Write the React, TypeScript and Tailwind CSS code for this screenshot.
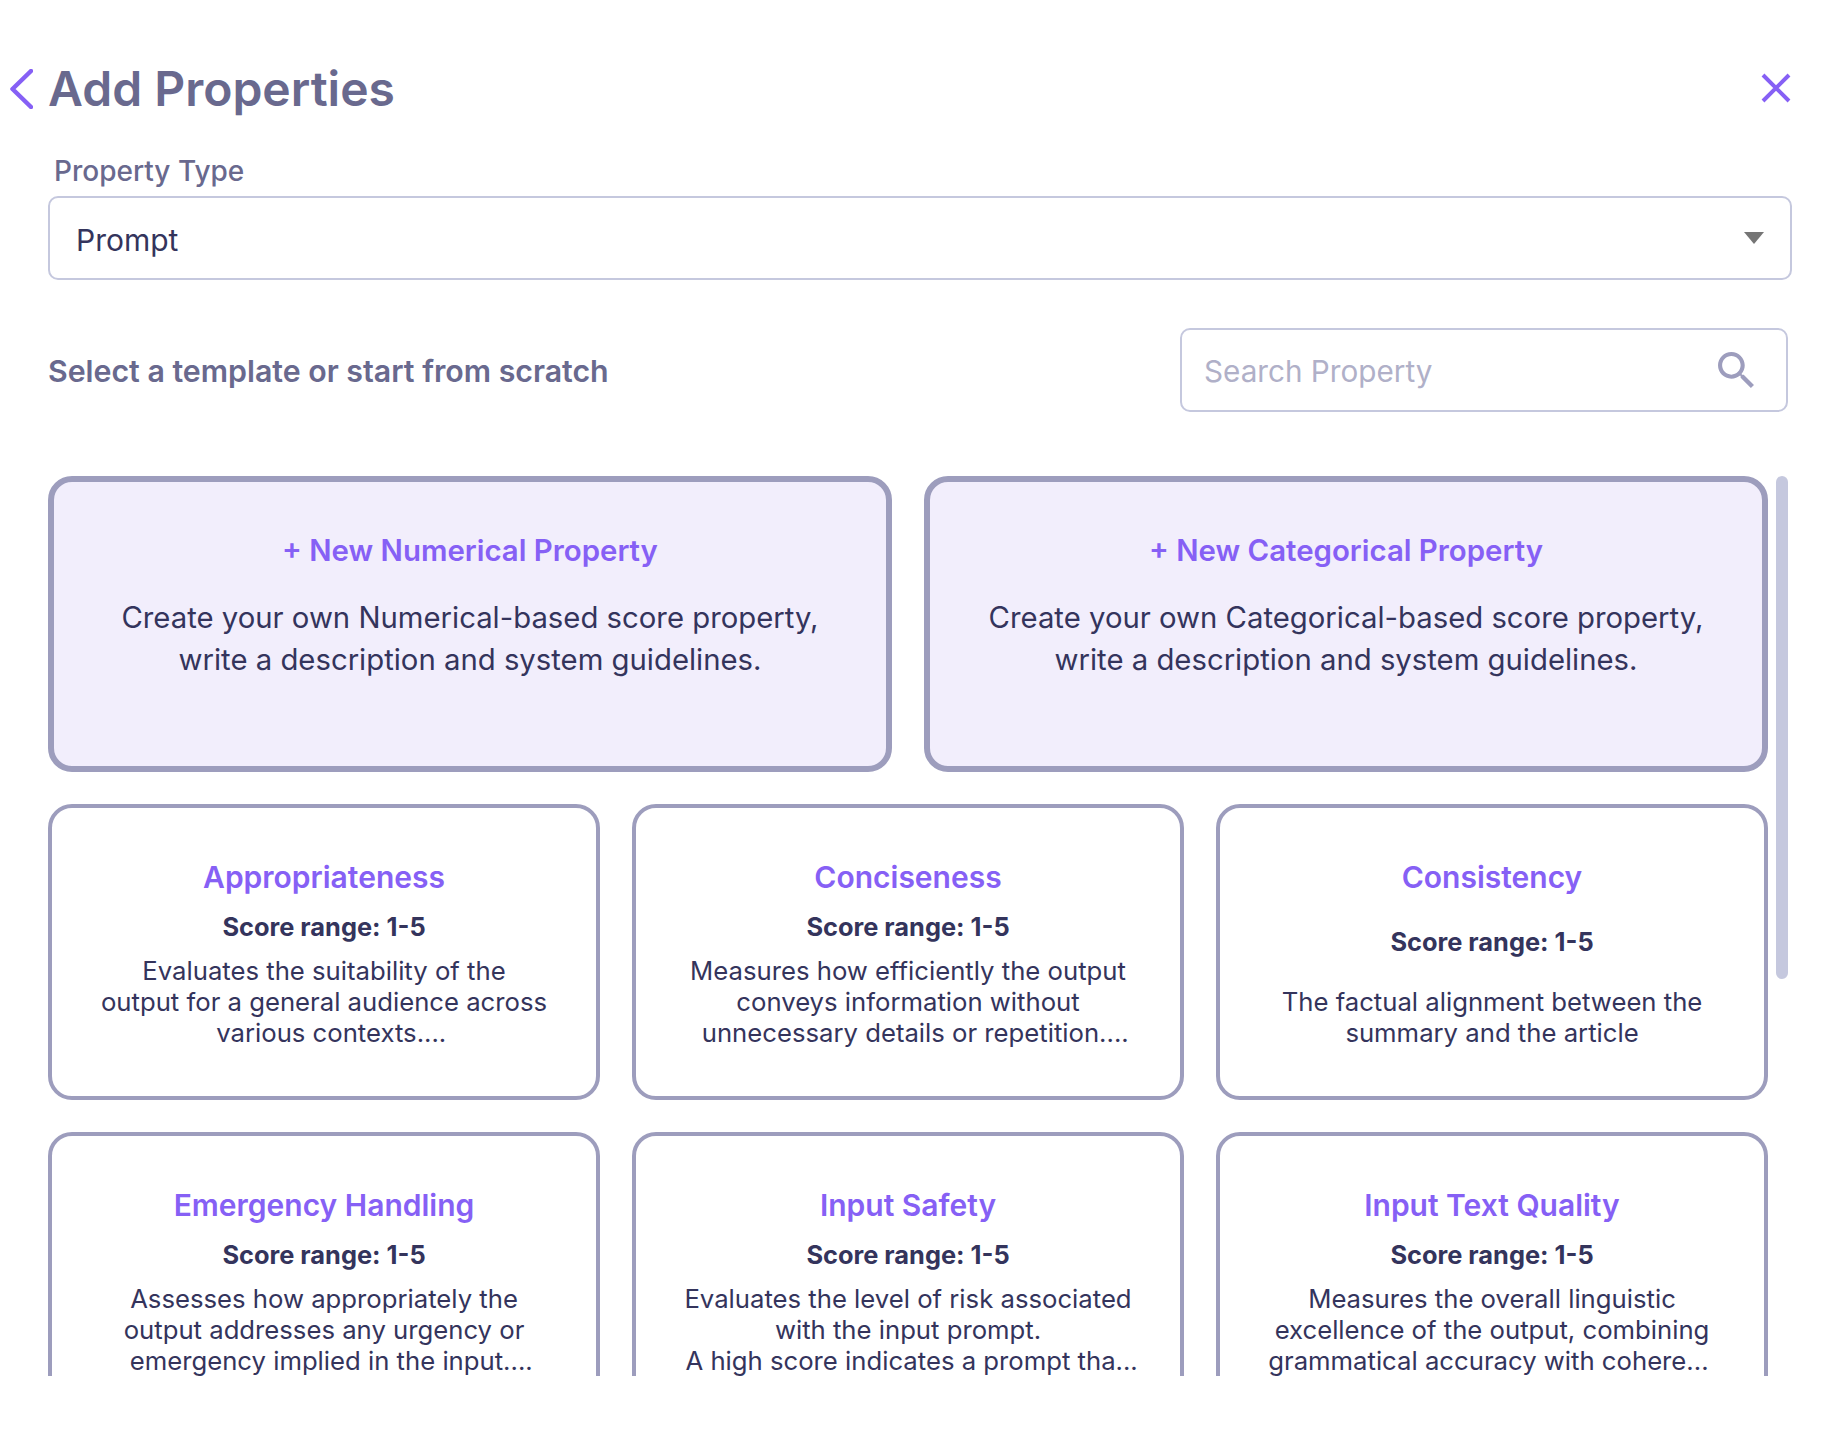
import React from 'react';

type Template = {
  title: string;
  lines: string[];
  spaced?: boolean;
};

const TEMPLATES: Template[] = [
  {
    title: 'Appropriateness',
    lines: ['Evaluates the suitability of the', 'output for a general audience across', '  various contexts....'],
  },
  {
    title: 'Conciseness',
    lines: ['Measures how efficiently the output', 'conveys information without', '  unnecessary details or repetition....'],
  },
  {
    title: 'Consistency',
    lines: ['The factual alignment between the', 'summary and the article'],
    spaced: true,
  },
  {
    title: 'Emergency Handling',
    lines: ['Assesses how appropriately the', 'output addresses any urgency or', '  emergency implied in the input....'],
  },
  {
    title: 'Input Safety',
    lines: ['Evaluates the level of risk associated', 'with the input prompt.', ' A high score indicates a prompt tha...'],
  },
  {
    title: 'Input Text Quality',
    lines: ['Measures the overall linguistic', 'excellence of the output, combining', 'grammatical accuracy with cohere... '],
  },
];

const NewPropertyCard = ({ title, kind }: { title: string; kind: string }) => (
  <div className="h-[296px] rounded-[24px] border-[6px] border-[#9d9dbd] bg-[#f2eefc] pt-[51px] text-center">
    <div className="text-[29.4px] leading-[36px] font-semibold text-[#8660f5]">{title}</div>
    <p className="mt-[28px] text-[29.3px] leading-[42px] text-[#34345c]">
      Create your own {kind}-based score property,
      <br />
      write a description and system guidelines.
    </p>
  </div>
);

const TemplateCard = ({ template }: { template: Template }) => (
  <div className="h-[296px] rounded-[24px] border-4 border-[#9d9dbd] bg-white pt-[51px] text-center">
    <div className="text-[30px] leading-[36px] font-semibold text-[#8660f5]">{template.title}</div>
    <div
      className={`text-[25.4px] leading-[34px] font-bold text-[#34345c] ${template.spaced ? 'mt-[30px]' : 'mt-[15px]'}`}
    >
      Score range: 1-5
    </div>
    <p
      className={`text-[25.7px] leading-[31px] whitespace-pre-wrap text-[#34345c] ${template.spaced ? 'mt-[27px]' : 'mt-[11px]'}`}
    >
      {template.lines.map((line) => (
        <span key={line} className="block">
          {line}
        </span>
      ))}
    </p>
  </div>
);

export default function App() {
  return (
    <div className="h-[1440px] w-full bg-white font-['Inter',sans-serif]">
      {/* Header */}
      <div className="flex h-[173px] items-start justify-between pt-[59px] pr-[43px] pl-[10px]">
        <div className="flex items-center gap-[15px]">
          <svg width="23" height="40" viewBox="0 0 23 40" fill="none" stroke="#8660f5" strokeWidth="4.5" strokeLinecap="round" strokeLinejoin="round">
            <path d="M21 2 2.5 20 21 38" />
          </svg>
          <h1 className="text-[48px] leading-[60px] font-semibold text-[#69698e]">Add Properties</h1>
        </div>
        <svg className="mt-[14px]" width="30" height="30" viewBox="0 0 30 30" fill="none" stroke="#8660f5" strokeWidth="4">
          <path d="M2 2 28 28M28 2 2 28" />
        </svg>
      </div>

      {/* Property type */}
      <div className="pr-[42px] pl-[48px]">
        <div className="-mt-[20px] pl-[6px] text-[28px] leading-[36px] font-medium text-[#69698e]">Property Type</div>
        <div className="mt-[7px] flex h-[84px] items-center justify-between rounded-[10px] border-2 border-[#c5c8de] pr-[26px] pl-[26px]">
          <span className="pt-[4px] text-[30px] text-[#34345c]">Prompt</span>
          <svg width="20" height="12" viewBox="0 0 20 12" fill="#757575">
            <path d="M0 0h20L10 12z" />
          </svg>
        </div>
      </div>

      {/* Template heading + search */}
      <div className="mt-[48px] flex items-center justify-between pr-[46px] pl-[48px]">
        <h2 className="pt-[3px] text-[30.3px] font-semibold text-[#69698e]">Select a template or start from scratch</h2>
        <div className="flex h-[84px] w-[608px] items-center justify-between rounded-[10px] border-2 border-[#c5c8de] pr-[32px] pl-[22px]">
          <span className="pt-[2px] text-[29.7px] text-[#b0b0c8]">Search Property</span>
          <svg width="36" height="36" viewBox="3 3 17.5 17.5" fill="#9d9dbd">
            <path d="M15.5 14h-.79l-.28-.27C15.41 12.59 16 11.11 16 9.5 16 5.91 13.09 3 9.5 3S3 5.91 3 9.5 5.91 16 9.5 16c1.61 0 3.09-.59 4.23-1.57l.27.28v.79l5 4.99L20.49 19l-4.99-5zm-6 0C7.01 14 5 11.99 5 9.5S7.01 5 9.5 5 14 7.01 14 9.5 11.99 14 9.5 14z" />
          </svg>
        </div>
      </div>

      {/* Scrolling card list */}
      <div className="relative mt-[64px] mr-[46px] ml-[48px] h-[900px] overflow-hidden pr-[20px]">
        <div className="grid grid-cols-2 gap-[32px]">
          <NewPropertyCard title="+ New Numerical Property" kind="Numerical" />
          <NewPropertyCard title="+ New Categorical Property" kind="Categorical" />
        </div>
        <div className="mt-[32px] grid grid-cols-3 gap-[32px]">
          {TEMPLATES.map((template) => (
            <TemplateCard key={template.title} template={template} />
          ))}
        </div>
        <div className="absolute top-0 right-0 h-[503px] w-[12px] rounded-full bg-[#c5c8de]" />
      </div>
    </div>
  );
}
